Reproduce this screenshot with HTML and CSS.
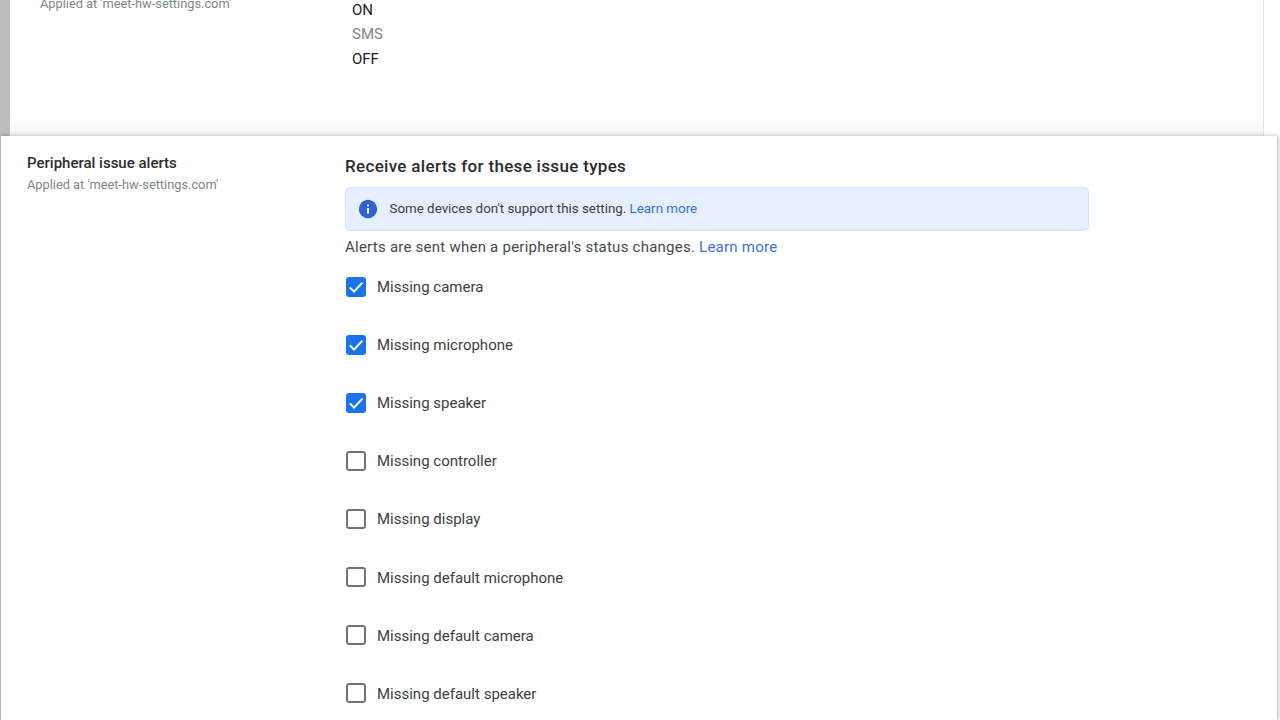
FILE: index.html
```html
<!DOCTYPE html>
<html lang="en">
<head>
<meta charset="utf-8">
<title>Peripheral issue alerts</title>
<link rel="stylesheet" href="styles.css">
</head>
<body>
<div class="backdrop">
  <section class="back-panel">
    <div class="back-label">Applied at 'meet-hw-settings.com'</div>
    <ul class="options">
      <li>ON</li>
      <li class="muted">SMS</li>
      <li>OFF</li>
    </ul>
  </section>
</div>
<section class="front-panel">
  <div class="label-col">
    <div class="title">Peripheral issue alerts</div>
    <div class="sub">Applied at 'meet-hw-settings.com'</div>
  </div>
  <div class="main-col">
    <h2 class="heading">Receive alerts for these issue types</h2>
    <div class="notice">
      <svg class="info" viewBox="0 0 24 24" width="22" height="22"><circle cx="12" cy="12" r="10" fill="#2f62cf"/><rect x="11" y="11" width="2" height="6" fill="#fff"/><rect x="11" y="7" width="2" height="2.2" fill="#fff"/></svg>
      <span>Some devices don't support this setting. <a class="link">Learn more</a></span>
    </div>
    <p class="desc">Alerts are sent when a peripheral's status changes. <a class="link">Learn more</a></p>
    <ul class="checks">
      <li><span class="box on"><svg viewBox="0 0 20 20" width="20" height="20"><path d="M3.8 10.4l4.2 4.2 8.4-9" fill="none" stroke="#fff" stroke-width="2"/></svg></span>Missing camera</li>
      <li><span class="box on"><svg viewBox="0 0 20 20" width="20" height="20"><path d="M3.8 10.4l4.2 4.2 8.4-9" fill="none" stroke="#fff" stroke-width="2"/></svg></span>Missing microphone</li>
      <li><span class="box on"><svg viewBox="0 0 20 20" width="20" height="20"><path d="M3.8 10.4l4.2 4.2 8.4-9" fill="none" stroke="#fff" stroke-width="2"/></svg></span>Missing speaker</li>
      <li><span class="box"></span>Missing controller</li>
      <li><span class="box"></span>Missing display</li>
      <li><span class="box"></span>Missing default microphone</li>
      <li><span class="box"></span>Missing default camera</li>
      <li><span class="box"></span>Missing default speaker</li>
    </ul>
  </div>
</section>
</body>
</html>
```
FILE: styles.css
```css
* { box-sizing: border-box; }
html, body { margin: 0; height: 720px; overflow: hidden; background: #fff; }
body { font-family: Roboto, "Liberation Sans", sans-serif; color: #202124; }
ul { list-style: none; margin: 0; padding: 0; }

.backdrop { height: 136px; padding-left: 11px; background: linear-gradient(to right, #bcbcbc 10px, #fff 10px); overflow: hidden; }
.back-panel { width: 1253px; height: 136px; background: linear-gradient(to bottom, #fff 118px, #f3f3f3 136px); border-right: 1px solid #e2e2e2; display: flex; }
.back-label { width: 341px; padding: 0 0 0 29px; margin-top: -4px; font-size: 12.8px; line-height: 16px; color: #80868b; }
.options { font-size: 15px; line-height: 24.5px; margin-top: -2.4px; }
.options .muted { color: #80868b; }

.front-panel { display: flex; height: 584px; width: 1277px; background: #fff; border-left: 1px solid #b5b5b5; box-shadow: 1px 0 4px rgba(0,0,0,.3); position: relative; }
.label-col { width: 344px; padding: 18px 0 0 26px; }
.title { font-size: 15px; line-height: 18px; font-weight: 500; color: #2b2c2f; }
.sub { font-size: 12.8px; line-height: 16px; margin-top: 5px; color: #80868b; }
.main-col { width: 744px; padding-top: 20px; }
.heading { margin: 0; font-size: 17px; line-height: 20px; font-weight: 500; letter-spacing: .32px; color: #2b2c2f; }
.notice { display: flex; align-items: center; gap: 10.5px; height: 44px; margin-top: 11px; padding: 0 0 1px 11px; font-size: 13.35px; background: #e6effd; border: 1px solid #d2e3fc; border-radius: 5px; color: #3c4043; }
.info { flex: none; }
.link { color: #3b6fdb; }
.desc { margin: 7px 0 0; font-size: 15px; line-height: 18px; letter-spacing: .24px; color: #47494d; }
.checks { margin-top: 2px; }
.checks li { display: flex; align-items: center; height: 58.1px; font-size: 15px; color: #3c4043; }
.box { flex: none; width: 20px; height: 20px; margin: -1px 11px 0 1px; border: 2px solid #6f7378; border-radius: 3px; display: flex; align-items: center; justify-content: center; }
.box.on { background: #1a73e8; border: none; }
```
